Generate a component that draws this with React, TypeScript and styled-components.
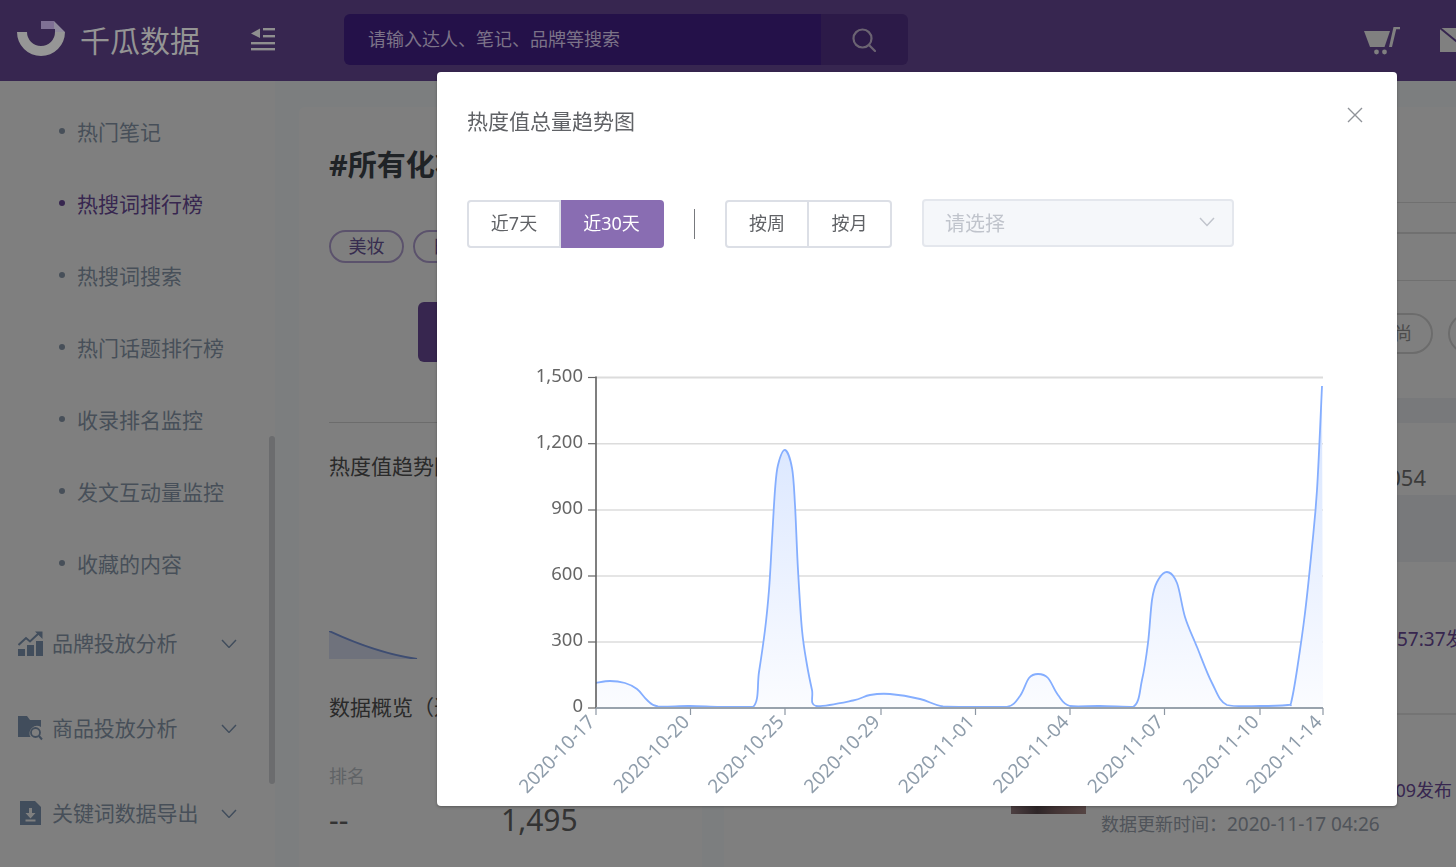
import styled, { createGlobalStyle } from 'styled-components';

const FONT = '"Noto Sans", "Noto Sans CJK SC", sans-serif';
const ICON_COLOR = '#829ab8';
const MENU_TEXT = '#8f9fb2';

const GlobalStyle = createGlobalStyle`
  html, body {
    margin: 0;
    height: 867px;
    overflow: hidden;
    background: #f8fdff;
    font-family: ${FONT};
  }
  * {
    box-sizing: border-box;
  }
`;

const Page = styled.div`
  width: 1456px;
  height: 867px;
  overflow: hidden;
  display: flex;
  flex-direction: column;
`;

const Header = styled.header`
  position: relative;
  z-index: 20;
  flex: none;
  height: 81px;
  background: #372650;
  display: flex;
  align-items: center;
  padding-left: 17px;
  overflow: hidden;
`;

const LogoText = styled.div`
  margin-left: 15px;
  width: 120px;
  font-size: 30px;
  line-height: 40px;
  color: #949494;
  white-space: nowrap;
`;

const MenuButton = styled.div`
  margin-left: 51px;
  width: 24px;
  height: 24px;
  flex: none;
  display: flex;
  margin-top: -4px;
`;

const SearchBox = styled.div`
  margin-left: 69px;
  width: 564px;
  height: 51px;
  flex: none;
  display: flex;
  border-radius: 6px;
  overflow: hidden;
  margin-top: -2px;
`;

const SearchInput = styled.div`
  flex: 1;
  background: #241149;
  color: #7c7388;
  font-size: 18px;
  line-height: 51px;
  padding-left: 24px;
`;

const SearchButton = styled.div`
  width: 87px;
  background: #2c1a48;
  display: flex;
  align-items: center;
  justify-content: center;
  padding-right: 2px;
`;

const HeaderIcons = styled.div`
  margin-left: 456px;
  display: flex;
  gap: 40px;
  flex: none;
  margin-top: -1px;
`;

const Body = styled.div`
  flex: 1;
  min-height: 0;
  display: flex;
`;

const Sidebar = styled.aside`
  position: relative;
  flex: none;
  width: 275px;
  background: #fff;
  padding-top: 16px;
`;

const Scrollbar = styled.div`
  position: absolute;
  left: 269px;
  top: 355px;
  width: 6px;
  height: 348px;
  border-radius: 3px;
  background: #d6d8dc;
`;

const SubItem = styled.div<{ $active?: boolean }>`
  height: 72px;
  display: flex;
  align-items: center;
  padding: 0 0 4px 59px;
  gap: 12px;
  font-size: 21px;
  color: ${(p) => (p.$active ? '#6f4d9f' : MENU_TEXT)};

  &::before {
    content: '';
    width: 6px;
    height: 6px;
    border-radius: 50%;
    background: ${(p) => (p.$active ? '#6f4d9f' : MENU_TEXT)};
  }
`;

const Group = styled.div`
  height: 85px;
  display: flex;
  align-items: center;
  padding-left: 18px;
  font-size: 21px;
  color: ${MENU_TEXT};
`;

const GroupLabel = styled.span`
  margin: 0 0 4px 9px;
  width: 169px;
  white-space: nowrap;
  letter-spacing: -0.1px;
`;

const Main = styled.main`
  flex: 1;
  min-width: 0;
  display: flex;
  gap: 22px;
  padding: 26px 0 0 24px;
  overflow: hidden;
`;

const LeftCard = styled.section`
  flex: none;
  width: 403px;
  height: 800px;
  background: #fff;
  border-radius: 6px 6px 0 0;
  padding: 40px 30px 0;
`;

const PageTitle = styled.h1`
  margin: 0;
  font-size: 29px;
  line-height: 36px;
  font-weight: 700;
  color: #3e464c;
  white-space: nowrap;
`;

const Tags = styled.div`
  margin-top: 47px;
  display: flex;
  gap: 9px;
`;

const Tag = styled.span`
  width: 75px;
  height: 33px;
  flex: none;
  border: 2px solid #b7a5d8;
  border-radius: 17px;
  color: #6f5a9f;
  font-size: 18px;
  line-height: 29px;
  text-align: center;
`;

const SearchAction = styled.div`
  margin: 39px 0 0 89px;
  width: 165px;
  height: 60px;
  border-radius: 6px;
  background: #6f4d9f;
`;

const Divider = styled.div`
  margin-top: 60px;
  height: 1px;
  background: #d8d8d8;
`;

const SectionTitle = styled.div<{ $top: number }>`
  margin-top: ${(p) => p.$top}px;
  font-size: 21px;
  line-height: 30px;
  color: #555;
  white-space: nowrap;
`;

const MiniChart = styled.svg`
  display: block;
  margin-top: 150px;
`;

const StatLabel = styled.div`
  margin-top: 41px;
  font-size: 18px;
  line-height: 26px;
  color: #c0c6cc;
`;

const StatRow = styled.div`
  margin-top: 11px;
  display: flex;
  font-size: 30px;
  line-height: 40px;
  color: #666;
`;

const StatValue = styled.span`
  width: 172px;
`;

const RightCard = styled.section`
  flex: 1;
  min-width: 0;
  height: 800px;
  background: #fff;
`;

const FilterRow = styled.div<{ $height: number; $border: number }>`
  height: ${(p) => p.$height}px;
  border-bottom: ${(p) => p.$border}px solid #e0e0e0;
`;

const Pills = styled.div`
  margin-top: 32px;
  height: 41px;
  display: flex;
  gap: 15px;
  padding-left: 636px;
`;

const Pill = styled.span`
  flex: none;
  width: 73px;
  border: 2px solid #d8d8d8;
  border-radius: 21px;
  padding-left: 32px;
  color: #999;
  font-size: 18px;
  line-height: 37px;
`;

const Band = styled.div<{ $height: number; $top?: number }>`
  height: ${(p) => p.$height}px;
  margin-top: ${(p) => p.$top ?? 0}px;
  background: #f0f3f7;
`;

const TotalRow = styled.div`
  height: 72px;
  display: flex;
  align-items: center;
  justify-content: flex-end;
  padding: 36px 30px 0 0;
  font-size: 22px;
  color: #777;
`;

const NoteRow = styled.div`
  height: 153px;
  display: flex;
  align-items: center;
  padding: 0 0 0 542px;
  border-bottom: 2px solid #e8e8e8;
  color: #6f4d9f;
  font-size: 19px;
  white-space: nowrap;
`;

const NoteCard = styled.div`
  display: flex;
  padding: 24px 0 0 287px;
`;

const Thumb = styled.div`
  width: 75px;
  height: 75px;
  flex: none;
  background: linear-gradient(90deg, #9a7f84 0%, #5d4c50 35%, #86696a 60%, #ab8a88 100%);
`;

const NoteInfo = styled.div`
  margin-left: 15px;
  padding-top: 34px;
  width: 351px;
  display: flex;
  flex-direction: column;
  font-size: 18px;
  line-height: 34px;
  white-space: nowrap;
`;

const PublishedAt = styled.div`
  text-align: right;
  color: #6f4d9f;
`;

const UpdatedAt = styled.div`
  color: #a0a8b4;
`;

const DateText = styled.span`
  font-size: 19px;
`;

const Scrim = styled.div`
  position: fixed;
  inset: 0;
  z-index: 10;
  background: rgba(0, 0, 0, 0.5);
`;

const Modal = styled.div`
  position: fixed;
  top: 72px;
  left: 437px;
  z-index: 30;
  width: 960px;
  height: 734px;
  background: #fff;
  border-radius: 4px;
  padding: 36px 30px 0;
  box-shadow: 0 1px 3px rgba(0, 0, 0, 0.3);
`;

const ModalHead = styled.div`
  display: flex;
  justify-content: space-between;
  height: 26px;
`;

const ModalTitle = styled.div`
  font-size: 21px;
  line-height: 26px;
  color: #606266;
`;

const CloseButton = styled.button`
  border: none;
  background: none;
  padding: 0;
  width: 16px;
  height: 16px;
  margin: -1px 4px 0 0;
  display: flex;
`;

const Toolbar = styled.div`
  margin-top: 66px;
  display: flex;
  align-items: center;
`;

const SegButton = styled.div<{ $active?: boolean; $width: number; $pos: 'first' | 'last' }>`
  width: ${(p) => p.$width}px;
  height: 48px;
  font-size: 18px;
  line-height: 43px;
  text-align: center;
  border: 2px solid ${(p) => (p.$active ? '#896db2' : '#dcdfe6')};
  border-left-width: ${(p) => (p.$pos === 'last' ? 0 : 2)}px;
  border-radius: ${(p) => (p.$pos === 'first' ? '4px 0 0 4px' : '0 4px 4px 0')};
  background: ${(p) => (p.$active ? '#896db2' : '#fff')};
  color: ${(p) => (p.$active ? '#fff' : '#606266')};
`;

const Separator = styled.div`
  width: 1px;
  height: 30px;
  margin: 0 30px;
  background: #77797d;
`;

const Select = styled.div`
  margin: -2px 0 0 30px;
  width: 312px;
  height: 48px;
  display: flex;
  align-items: center;
  justify-content: space-between;
  padding: 0 17px 2px 21px;
  background: #f5f7fa;
  border: 2px solid #e4e7ed;
  border-radius: 4px;
  font-size: 20px;
  color: #c0c4cc;
`;

const ChartSvg = styled.svg`
  display: block;
  margin-top: 102px;
  font-family: ${FONT};
`;

const Y_TICKS = [
  { label: '1,500', y: 377.5 },
  { label: '1,200', y: 443.7 },
  { label: '900', y: 510 },
  { label: '600', y: 576 },
  { label: '300', y: 642 },
  { label: '0', y: 708 },
];

const X_TICKS = [
  { label: '2020-10-17', x: 596 },
  { label: '2020-10-20', x: 690.5 },
  { label: '2020-10-25', x: 785 },
  { label: '2020-10-29', x: 881 },
  { label: '2020-11-01', x: 975.5 },
  { label: '2020-11-04', x: 1070 },
  { label: '2020-11-07', x: 1164.5 },
  { label: '2020-11-10', x: 1260 },
  { label: '2020-11-14', x: 1323 },
];

const LINE: [number, number][] = [
  [596, 683], [610, 681], [625, 683], [637, 689], [647, 700], [658, 706.5], [690, 706], [720, 707],
  [753, 707], [759, 672], [765, 630], [769, 590], [772, 540], [775, 490], [778, 465], [785, 450],
  [792, 468], [795, 505], [798, 570], [802, 630], [807, 665], [812, 690], [816, 706], [853, 700.5],
  [870, 695], [890, 694], [920, 699], [943, 706.5], [975, 707], [1007, 707], [1020, 696], [1029, 678],
  [1038, 674], [1048, 678], [1058, 695], [1070, 706], [1100, 706], [1133, 707], [1142, 680], [1148, 643],
  [1152, 600], [1157, 582], [1167, 572], [1177, 583], [1185, 617], [1197, 647], [1212, 683], [1227, 705],
  [1260, 706], [1288, 705], [1291, 703], [1297, 670], [1305, 613], [1312, 547], [1317, 490], [1322, 386],
];

// catmull-rom through the sampled points, clamped so it does not dip below the axis
function smoothPath(pts: [number, number][]) {
  let d = `M${pts[0][0]} ${pts[0][1]}`;
  for (let i = 0; i < pts.length - 1; i++) {
    const p0 = pts[Math.max(i - 1, 0)];
    const p1 = pts[i];
    const p2 = pts[i + 1];
    const p3 = pts[Math.min(i + 2, pts.length - 1)];
    const c1x = p1[0] + (p2[0] - p0[0]) / 6;
    const c1y = Math.min(p1[1] + (p2[1] - p0[1]) / 6, 707);
    const c2x = p2[0] - (p3[0] - p1[0]) / 6;
    const c2y = Math.min(p2[1] - (p3[1] - p1[1]) / 6, 707);
    d += ` C${c1x.toFixed(1)} ${c1y.toFixed(1)} ${c2x.toFixed(1)} ${c2y.toFixed(1)} ${p2[0]} ${p2[1]}`;
  }
  return d;
}

function TrendChart() {
  const line = smoothPath(LINE);
  return (
    <ChartSvg width="900" height="450" viewBox="467 350 900 450">
      <defs>
        <linearGradient id="area" x1="0" y1="0" x2="0" y2="1">
          <stop offset="0" stopColor="#d5e3ff" />
          <stop offset="1" stopColor="#fbfcff" />
        </linearGradient>
      </defs>
      {Y_TICKS.slice(0, 5).map((t) => (
        <line key={t.y} x1="596" x2="1323" y1={t.y} y2={t.y} stroke="#dcdcdc" strokeWidth={t.y < 380 ? 2 : 1.5} />
      ))}
      <path d={`${line} L1323 708 L596 708Z`} fill="url(#area)" />
      <path d={line} fill="none" stroke="#85aeff" strokeWidth="1.8" />
      <line x1="596" x2="596" y1="376.5" y2="708" stroke="#555" strokeWidth="1.5" />
      <line x1="596" x2="1323" y1="708" y2="708" stroke="#99a3ad" strokeWidth="2" />
      {Y_TICKS.map((t) => (
        <g key={t.label}>
          <line x1="588" x2="596" y1={t.y} y2={t.y} stroke="#666" strokeWidth="1.2" />
          <text x="583" y={t.y + 4} textAnchor="end" fontSize="18.5" fill="#666">
            {t.label}
          </text>
        </g>
      ))}
      {X_TICKS.map((t) => (
        <g key={t.label}>
          <line x1={t.x} x2={t.x} y1="708" y2="715" stroke="#8d97a3" strokeWidth="1.2" />
          <text
            x={t.x}
            y={723}
            textAnchor="end"
            fontSize="19"
            fill="#8f9dab"
            transform={`rotate(-46 ${t.x} 723)`}
          >
            {t.label}
          </text>
        </g>
      ))}
    </ChartSvg>
  );
}

function Logo() {
  return (
    <svg width="48" height="36" viewBox="0 0 48 36" style={{ flex: 'none', marginTop: '-3px' }}>
      <path d="M0 11H10A14 14 0 0 0 38 11H48A24 24 0 0 1 0 11Z" fill="#969696" />
      <path d="M24 0H37V8H24Z" fill="#7f7095" />
      <path d="M37 0L48 11H38V8H37Z" fill="#8f8a9c" />
    </svg>
  );
}

function MenuIcon() {
  return (
    <svg width="24" height="24" viewBox="0 0 24 24" fill="#8f8f8f">
      <path d="M0 6.5L9 1.5V11Z" />
      <rect x="12" y="1" width="12" height="2.4" />
      <rect x="12" y="8" width="12" height="2.4" />
      <rect y="15" width="24" height="2.4" />
      <rect y="21" width="24" height="2.4" />
    </svg>
  );
}

function SearchIcon() {
  return (
    <svg width="24" height="24" viewBox="0 0 24 24" fill="none" stroke="#6b6372" strokeWidth="2.2">
      <circle cx="10.5" cy="10.5" r="9" />
      <path d="M17 17L23 23" strokeLinecap="round" />
    </svg>
  );
}

function CartIcon() {
  return (
    <svg width="36" height="29" viewBox="0 0 36 29" fill="#808080">
      <path d="M0 5H26L20.5 21H6Z" />
      <path d="M25 21L29.5 1H36V3.2H32.2L28 21Z" />
      <circle cx="12.5" cy="26" r="2.4" />
      <circle cx="20.5" cy="26" r="2.4" />
    </svg>
  );
}

function MailIcon() {
  return (
    <svg width="30" height="24" viewBox="0 0 30 24" style={{ flex: 'none', marginTop: '2px' }}>
      <rect width="30" height="24" fill="#808080" />
      <path d="M0 0L16 13L30 24" fill="none" stroke="#372650" strokeWidth="2" />
    </svg>
  );
}

function Chevron({ color, width }: { color: string; width: number }) {
  return (
    <svg width={width} height={width * 0.6} viewBox="0 0 16 9.6" fill="none" stroke={color} strokeWidth="1.5">
      <path d="M1 1L8 8.4L15 1" />
    </svg>
  );
}

function BrandIcon() {
  return (
    <svg width="25" height="25" viewBox="0 0 25 25" fill={ICON_COLOR}>
      <rect y="18" width="7" height="7" />
      <rect x="9" y="14" width="7" height="11" />
      <rect x="18" y="10" width="7" height="15" />
      <path d="M0.5 14L8 7L12 10.5L20.5 2.5" fill="none" stroke={ICON_COLOR} strokeWidth="2" />
      <path d="M17 0.5H24.5V8Z" />
    </svg>
  );
}

function GoodsIcon() {
  return (
    <svg width="25" height="25" viewBox="0 0 25 25" fill={ICON_COLOR}>
      <path d="M0 0H9L12 4H23V11A7.5 7.5 0 0 0 12.5 21H0Z" />
      <circle cx="17.5" cy="16.5" r="4.5" fill="none" stroke={ICON_COLOR} strokeWidth="1.8" />
      <path d="M21 20L24 23.5" stroke={ICON_COLOR} strokeWidth="2" />
    </svg>
  );
}

function ExportIcon() {
  return (
    <svg width="25" height="25" viewBox="0 0 25 25" style={{ marginLeft: '2px', marginRight: '-2px' }}>
      <path d="M0 0H15L21 6V24H0Z" fill={ICON_COLOR} />
      <path d="M9 7H12V12H15.5L10.5 17.5L5.5 12H9ZM5.5 18.5H15.5V20.5H5.5Z" fill="#ffffff" />
    </svg>
  );
}

function CloseIcon() {
  return (
    <svg width="16" height="16" viewBox="0 0 16 16" fill="none" stroke="#909399" strokeWidth="1.4">
      <path d="M1 1L15 15M15 1L1 15" />
    </svg>
  );
}

const NOTE_ITEMS = ['热门笔记', '热搜词排行榜', '热搜词搜索', '热门话题排行榜', '收录排名监控', '发文互动量监控', '收藏的内容'];

const GROUPS = [
  { label: '品牌投放分析', icon: <BrandIcon /> },
  { label: '商品投放分析', icon: <GoodsIcon /> },
  { label: '关键词数据导出', icon: <ExportIcon /> },
];

export default function App() {
  return (
    <>
      <GlobalStyle />
      <Page>
        <Header>
          <Logo />
          <LogoText>千瓜数据</LogoText>
          <MenuButton>
            <MenuIcon />
          </MenuButton>
          <SearchBox>
            <SearchInput>请输入达人、笔记、品牌等搜索</SearchInput>
            <SearchButton>
              <SearchIcon />
            </SearchButton>
          </SearchBox>
          <HeaderIcons>
            <CartIcon />
            <MailIcon />
          </HeaderIcons>
        </Header>
        <Body>
          <Sidebar>
            {NOTE_ITEMS.map((item) => (
              <SubItem key={item} $active={item === '热搜词排行榜'}>
                {item}
              </SubItem>
            ))}
            {GROUPS.map((g) => (
              <Group key={g.label}>
                {g.icon}
                <GroupLabel>{g.label}</GroupLabel>
                <Chevron color={ICON_COLOR} width={16} />
              </Group>
            ))}
            <Scrollbar />
          </Sidebar>
          <Main>
            <LeftCard>
              <PageTitle>#所有化妆</PageTitle>
              <Tags>
                <Tag>美妆</Tag>
                <Tag>日用</Tag>
              </Tags>
              <SearchAction />
              <Divider />
              <SectionTitle $top={28}>热度值趋势图</SectionTitle>
              <MiniChart width="343" height="28" viewBox="0 0 343 28">
                <path d="M0 0C30 14 60 24 88 28H0Z" fill="#dfe5f8" />
                <path d="M0 0C30 14 60 24 88 28" fill="none" stroke="#7d9be4" strokeWidth="2" />
              </MiniChart>
              <SectionTitle $top={33}>数据概览（近30天）</SectionTitle>
              <StatLabel>排名</StatLabel>
              <StatRow>
                <StatValue>--</StatValue>
                <span>1,495</span>
              </StatRow>
            </LeftCard>
            <RightCard>
              <FilterRow $height={96} $border={1} />
              <FilterRow $height={31} $border={2} />
              <FilterRow $height={47} $border={1} />
              <Pills>
                <Pill>尚</Pill>
                <Pill />
              </Pills>
              <Band $height={25} $top={44} />
              <TotalRow>054</TotalRow>
              <Band $height={67} />
              <NoteRow>2020-11-14 12:57:37发布</NoteRow>
              <NoteCard>
                <Thumb />
                <NoteInfo>
                  <PublishedAt>2020-11-09 10:32:09发布</PublishedAt>
                  <UpdatedAt>
                    数据更新时间：<DateText>2020-11-17 04:26</DateText>
                  </UpdatedAt>
                </NoteInfo>
              </NoteCard>
            </RightCard>
          </Main>
        </Body>
      </Page>
      <Scrim />
      <Modal>
        <ModalHead>
          <ModalTitle>热度值总量趋势图</ModalTitle>
          <CloseButton aria-label="close">
            <CloseIcon />
          </CloseButton>
        </ModalHead>
        <Toolbar>
          <SegButton $width={94} $pos="first">近7天</SegButton>
          <SegButton $width={103} $pos="last" $active>近30天</SegButton>
          <Separator />
          <SegButton $width={84} $pos="first">按周</SegButton>
          <SegButton $width={83} $pos="last">按月</SegButton>
          <Select>
            <span>请选择</span>
            <Chevron color="#c0c4cc" width={16} />
          </Select>
        </Toolbar>
        <TrendChart />
      </Modal>
    </>
  );
}
